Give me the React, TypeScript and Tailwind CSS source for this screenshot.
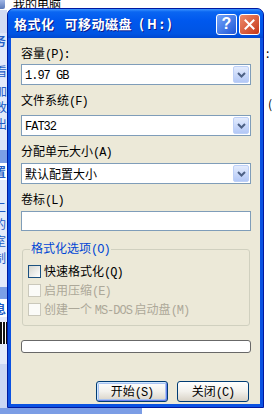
import React from "react";

const Chevron = () => (
  <svg width="9" height="6" viewBox="0 0 9 6">
    <path d="M1 1 L4.5 4.5 L8 1" fill="none" stroke="#4d6185" strokeWidth="2" />
  </svg>
);

const Combo = ({ children }: { children: React.ReactNode }) => (
  <div className="h-[21px] flex items-center border border-[#7f9db9] bg-white pl-[3px] pr-[1px]">
    <div className="flex-1 text-[12px] leading-[14px] text-black">{children}</div>
    <div className="w-[16px] h-[17px] rounded-[2px] border border-[#bdd0f7] bg-gradient-to-b from-[#e4ecfd] to-[#b3c8f6] flex items-center justify-center">
      <Chevron />
    </div>
  </div>
);

// half-width latin, close to SimSun's 6px cells
const Mono = ({ children }: { children: React.ReactNode }) => (
  <span className="font-['Liberation_Mono',monospace] text-[12px] tracking-[-1px]">{children}</span>
);

const Check = ({ label, disabled }: { label: React.ReactNode; disabled?: boolean }) => (
  <div className="flex items-center h-[19px]">
    <div
      className={
        disabled
          ? "w-[13px] h-[13px] border border-[#cac8bb] bg-[#fbfbf8]"
          : "w-[13px] h-[13px] border border-[#1c5180] bg-gradient-to-br from-[#d6d6cf] to-white"
      }
    />
    <span className={disabled ? "ml-[3px] text-[12px] leading-[14px] text-[#aca899]" : "ml-[3px] text-[12px] leading-[14px] text-black"}>
      {label}
    </span>
  </div>
);

const Label = ({ children, className }: { children: React.ReactNode; className: string }) => (
  <div className={"text-[12px] leading-[14px] text-black " + className}>{children}</div>
);

const LeftStrip = () => (
  <div className="w-[7px] h-[408px] flex flex-col overflow-hidden text-[12px] leading-[14px] text-[#215dc6]">
    <div className="h-[10px] bg-white flex items-start">
      <div className="w-[5px] h-[9px] bg-gradient-to-b from-[#9fb6e6] to-[#5a78b8] rounded-br-[2px]" />
    </div>
    <div className="h-[23px] bg-[#d3dcf3]" />
    <div className="h-[17px] bg-[#dfe7fa] font-bold -ml-[6px] pt-[1px]">务</div>
    <div className="h-[90px] bg-[#e3eafa] -ml-[5px] flex flex-col">
      <div className="mt-[14px]">看</div>
      <div className="mt-[6px]">加</div>
      <div className="mt-[2px]">改</div>
      <div className="mt-[3px]">出</div>
    </div>
    <div className="h-[10px] bg-[#dce4f8]" />
    <div className="h-[13px] bg-[#7b9fe6]" />
    <div className="h-[17px] bg-white font-bold -ml-[6px] pt-[2px]">置</div>
    <div className="h-[107px] bg-[#e3eafa] -ml-[6px] flex flex-col">
      <div className="mt-[20px]">二</div>
      <div className="mt-[3px]">的</div>
      <div className="mt-[3px]">室</div>
      <div className="mt-[3px]">制</div>
    </div>
    <div className="h-[12px] bg-[#7b9fe6]" />
    <div className="h-[18px] bg-white font-bold -ml-[6px] pt-[3px]">息</div>
    <div className="h-[5px] bg-[#e3eafa]" />
    <div className="h-[22px] bg-[repeating-linear-gradient(90deg,#111_0px,#111_2px,#fff_2px,#fff_3px)]" />
    <div className="h-[20px] bg-[#e3eafa]" />
    <div className="flex-1 bg-[#c9d6f4]" />
  </div>
);

const RightStrip = () => (
  <div className="w-[9px] h-[408px] bg-white flex flex-col text-[12px] leading-[14px] text-black overflow-hidden">
    <div className="h-[46px]" />
    <div className="ml-[2px]">:</div>
    <div className="h-[37px]" />
    <div className="ml-[4px]">(</div>
  </div>
);

const Dialog = () => (
  <div className="w-[257px] h-[400px] flex flex-col rounded-t-[7px] border border-[#0019a0] bg-[#0b52e2] overflow-hidden">
    <div className="h-[29px] shrink-0 flex items-center bg-[linear-gradient(180deg,#3d95ff_0%,#0a66f2_10%,#0058ee_40%,#0054e3_85%,#0047d0_100%)]">
      <div className="pl-[6px] flex-1 flex items-center text-white font-bold text-[13px] leading-[16px] [text-shadow:1px_1px_#0a1a8c]">
        <span className="tracking-[0.5px]">格式化</span>
        <span className="ml-[10px] tracking-[0.5px]">可移动磁盘</span>
        <span className="ml-[7px] tracking-[3px]">(H:)</span>
      </div>
      <div className="flex gap-[2px] pr-[3px] pt-[1px]">
        <div className="w-[21px] h-[21px] rounded-[3px] border border-white bg-gradient-to-br from-[#74a4fa] to-[#1f55d6] flex items-center justify-center text-white font-bold text-[16px] leading-none font-['Liberation_Sans',sans-serif]">
          ?
        </div>
        <div className="w-[21px] h-[21px] rounded-[3px] border border-white bg-gradient-to-br from-[#ee8a69] to-[#c43412] flex items-center justify-center">
          <svg width="11" height="11" viewBox="0 0 11 11">
            <path d="M1.5 1.5 L9.5 9.5 M9.5 1.5 L1.5 9.5" stroke="white" strokeWidth="2" strokeLinecap="square" />
          </svg>
        </div>
      </div>
    </div>
    <div className="flex-1 mx-[3px] mb-[3px] bg-[#ece9d8] pl-[10px] pr-[9px] flex flex-col">
      <Label className="mt-[8px]">
        容量<Mono>(P):</Mono>
      </Label>
      <div className="mt-[2px]">
        <Combo>
          <Mono>1.97 GB</Mono>
        </Combo>
      </div>
      <Label className="mt-[8px]">
        文件系统<Mono>(F)</Mono>
      </Label>
      <div className="mt-[6px]">
        <Combo>
          <Mono>FAT32</Mono>
        </Combo>
      </div>
      <Label className="mt-[8px]">
        分配单元大小<Mono>(A)</Mono>
      </Label>
      <div className="mt-[3px]">
        <Combo>默认配置大小</Combo>
      </div>
      <Label className="mt-[8px]">
        卷标<Mono>(L)</Mono>
      </Label>
      <div className="mt-[3px] h-[20px] border border-[#7f9db9] bg-white" />
      <fieldset className="mt-[10px] mx-[1px] border border-[#d0d0bf] rounded-[3px] pl-[5px] pt-[5px] pb-[6px]">
        <legend className="ml-[2px] px-[1px] text-[12px] leading-[14px] text-[#0046d5]">
          格式化选项<Mono>(O)</Mono>
        </legend>
        <Check
          label={
            <>
              快速格式化<Mono>(Q)</Mono>
            </>
          }
        />
        <Check
          label={
            <>
              启用压缩<Mono>(E)</Mono>
            </>
          }
          disabled
        />
        <Check
          label={
            <>
              创建一个 <Mono>MS-DOS</Mono> 启动盘<Mono>(M)</Mono>
            </>
          }
          disabled
        />
      </fieldset>
      <div className="mt-[14px] h-[13px] rounded-[3px] border border-[#686868] bg-white" />
      <div className="mt-[28px] flex justify-end gap-[9px] pr-[2px]">
        <button className="w-[72px] h-[21px] rounded-[3px] border border-[#003c74] bg-gradient-to-b from-white via-[#f2f1ec] to-[#d8d2c6] shadow-[inset_1px_1px_0_#cee7ff,inset_-1px_-1px_0_#6982ee,inset_0_0_0_2px_#a9c3f2] text-[12px] leading-[14px] text-black">
          开始<Mono>(S)</Mono>
        </button>
        <button className="w-[72px] h-[21px] rounded-[3px] border border-[#003c74] bg-gradient-to-b from-white via-[#f2f1ec] to-[#d8d2c6] text-[12px] leading-[14px] text-black">
          关闭<Mono>(C)</Mono>
        </button>
      </div>
    </div>
  </div>
);

export default function App() {
  return (
    <div className="w-[273px] h-[414px] overflow-hidden bg-white flex flex-col font-['Noto_Sans_CJK_SC',sans-serif]">
      <div className="flex h-[408px]">
        <LeftStrip />
        <div className="flex flex-col">
          <div className="h-[8px] overflow-hidden">
            <div className="ml-[6px] -mt-[2px] text-[12px] leading-[12px] text-black">我的电脑</div>
          </div>
          <Dialog />
        </div>
        <RightStrip />
      </div>
      <div className="h-[6px] flex">
        <div className="w-[142px] bg-[#7b9de5]" />
        <div className="flex-1 bg-white" />
      </div>
    </div>
  );
}
